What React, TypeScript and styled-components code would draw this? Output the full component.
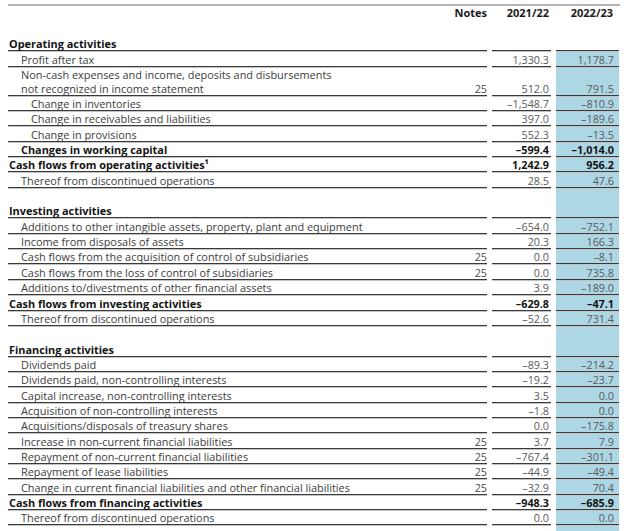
import React from "react";
import styled, { createGlobalStyle } from "styled-components";

type Line = {
  label: string[];
  note?: string;
  prev: string;
  curr: string;
  level?: number;
  bold?: boolean;
};

type Section = {
  title: string;
  shadeTitle?: boolean;
  rows: Line[];
};

const sections: Section[] = [
  {
    title: "Operating activities",
    rows: [
      { label: ["Profit after tax"], prev: "1,330.3", curr: "1,178.7" },
      {
        label: [
          "Non-cash expenses and income, deposits and disbursements",
          "not recognized in income statement",
        ],
        note: "25",
        prev: "512.0",
        curr: "791.5",
      },
      { label: ["Change in inventories"], level: 2, prev: "–1,548.7", curr: "–810.9" },
      { label: ["Change in receivables and liabilities"], level: 2, prev: "397.0", curr: "–189.6" },
      { label: ["Change in provisions"], level: 2, prev: "552.3", curr: "–13.5" },
      { label: ["Changes in working capital"], bold: true, prev: "–599.4", curr: "–1,014.0" },
      { label: ["Cash flows from operating activities¹"], level: 0, bold: true, prev: "1,242.9", curr: "956.2" },
      { label: ["Thereof from discontinued operations"], prev: "28.5", curr: "47.6" },
    ],
  },
  {
    title: "Investing activities",
    shadeTitle: true,
    rows: [
      { label: ["Additions to other intangible assets, property, plant and equipment"], prev: "–654.0", curr: "–752.1" },
      { label: ["Income from disposals of assets"], prev: "20.3", curr: "166.3" },
      { label: ["Cash flows from the acquisition of control of subsidiaries"], note: "25", prev: "0.0", curr: "–8.1" },
      { label: ["Cash flows from the loss of control of subsidiaries"], note: "25", prev: "0.0", curr: "735.8" },
      { label: ["Additions to/divestments of other financial assets"], prev: "3.9", curr: "–189.0" },
      { label: ["Cash flows from investing activities"], level: 0, bold: true, prev: "–629.8", curr: "–47.1" },
      { label: ["Thereof from discontinued operations"], prev: "–52.6", curr: "731.4" },
    ],
  },
  {
    title: "Financing activities",
    shadeTitle: true,
    rows: [
      { label: ["Dividends paid"], prev: "–89.3", curr: "–214.2" },
      { label: ["Dividends paid, non-controlling interests"], prev: "–19.2", curr: "–23.7" },
      { label: ["Capital increase, non-controlling interests"], prev: "3.5", curr: "0.0" },
      { label: ["Acquisition of non-controlling interests"], prev: "–1.8", curr: "0.0" },
      { label: ["Acquisitions/disposals of treasury shares"], prev: "0.0", curr: "–175.8" },
      { label: ["Increase in non-current financial liabilities"], note: "25", prev: "3.7", curr: "7.9" },
      { label: ["Repayment of non-current financial liabilities"], note: "25", prev: "–767.4", curr: "–301.1" },
      { label: ["Repayment of lease liabilities"], note: "25", prev: "–44.9", curr: "–49.4" },
      { label: ["Change in current financial liabilities and other financial liabilities"], note: "25", prev: "–32.9", curr: "70.4" },
      { label: ["Cash flows from financing activities"], level: 0, bold: true, prev: "–948.3", curr: "–685.9" },
      { label: ["Thereof from discontinued operations"], prev: "0.0", curr: "0.0" },
    ],
  },
];

const GlobalStyle = createGlobalStyle`
  body {
    margin: 0;
    background: #fff;
    font-family: "Open Sans", "Noto Sans", sans-serif;
  }
`;

const BLUE = "#aed7e6";

// table sits at x=8..619 in the shot
const Page = styled.div`
  padding: 4px 0 0 8px;
  height: 531px;
  box-sizing: border-box;
  overflow: hidden;
`;

const Grid = styled.div<{ $height?: number }>`
  display: grid;
  grid-template-columns: 479px 59px 63px;
  column-gap: 5px;
  height: ${(p) => p.$height ?? 15.35}px;
`;

const HeaderRow = styled(Grid)`
  width: 612px;
  border-top: 2px solid #b4b4b4;
  height: 16px;
`;

const HeadCell = styled.div<{ $pad?: number }>`
  text-align: right;
  font-size: 11px;
  font-weight: 700;
  color: #1a1a1a;
  line-height: 14px;
  padding-right: ${(p) => p.$pad ?? 0}px;
`;

const Gap = styled.div<{ $height: number }>`
  height: ${(p) => p.$height}px;
`;

const Cell = styled.div<{ $shade?: boolean; $line?: boolean }>`
  display: flex;
  align-items: flex-end;
  box-sizing: border-box;
  background: ${(p) =>
      p.$line
        ? "linear-gradient(#3a3a3a, #3a3a3a) left bottom 1px / 100% 1px no-repeat, linear-gradient(#c4c4c4, #c4c4c4) left bottom / 100% 1px no-repeat,"
        : ""}
    ${(p) => (p.$shade ? BLUE : "transparent")};
  padding-bottom: 2px;
`;

const LabelCell = styled(Cell)`
  justify-content: space-between;
`;

const Label = styled.div<{ $level: number; $bold?: boolean }>`
  padding-left: ${(p) => [1, 13, 23][p.$level]}px;
  font-size: 10.9px;
  line-height: 13px;
  font-weight: ${(p) => (p.$bold ? 700 : 400)};
  color: ${(p) => (p.$bold ? "#141414" : "#3c3c3c")};
  white-space: nowrap;

  div + div {
    margin-top: 1px;
  }
`;

const Note = styled.span`
  font-size: 10.8px;
  line-height: 13px;
  color: #4a4a4a;
`;

const Value = styled(Cell)<{ $bold?: boolean; $pad: number }>`
  justify-content: flex-end;
  padding-right: ${(p) => p.$pad}px;
  font-size: 10.8px;
  line-height: 13px;
  font-weight: ${(p) => (p.$bold ? 700 : 400)};
  color: ${(p) => (p.$bold ? "#141414" : "#5a5a5a")};
`;

function SectionBlock({ section, first }: { section: Section; first: boolean }) {
  return (
    <>
      {!first && (
        <Grid>
          <div />
          <div />
          <Cell $shade />
        </Grid>
      )}
      <Grid>
        <LabelCell $line>
          <Label $level={0} $bold>
            {section.title}
          </Label>
        </LabelCell>
        <Cell $line />
        <Cell $line $shade={section.shadeTitle} />
      </Grid>
      {section.rows.map((r, i) => (
        <Grid key={i} $height={r.label.length > 1 ? 29 : undefined}>
          <LabelCell $line>
            <Label $level={r.level ?? 1} $bold={r.bold}>
              {r.label.map((t, j) => (
                <div key={j}>{t}</div>
              ))}
            </Label>
            {r.note && <Note>{r.note}</Note>}
          </LabelCell>
          <Value $line $pad={2} $bold={r.bold}>
            {r.prev}
          </Value>
          <Value $line $shade $pad={5} $bold={r.bold}>
            {r.curr}
          </Value>
        </Grid>
      ))}
    </>
  );
}

export default function App() {
  return (
    <Page>
      <GlobalStyle />
      <HeaderRow>
        <HeadCell>Notes</HeadCell>
        <HeadCell $pad={2}>2021/22</HeadCell>
        <HeadCell $pad={6}>2022/23</HeadCell>
      </HeaderRow>
      <Gap $height={15} />
      {sections.map((s, i) => (
        <SectionBlock key={s.title} section={s} first={i === 0} />
      ))}
      <Grid $height={10}>
        <div />
        <div />
        <Cell $shade />
      </Grid>
    </Page>
  );
}
